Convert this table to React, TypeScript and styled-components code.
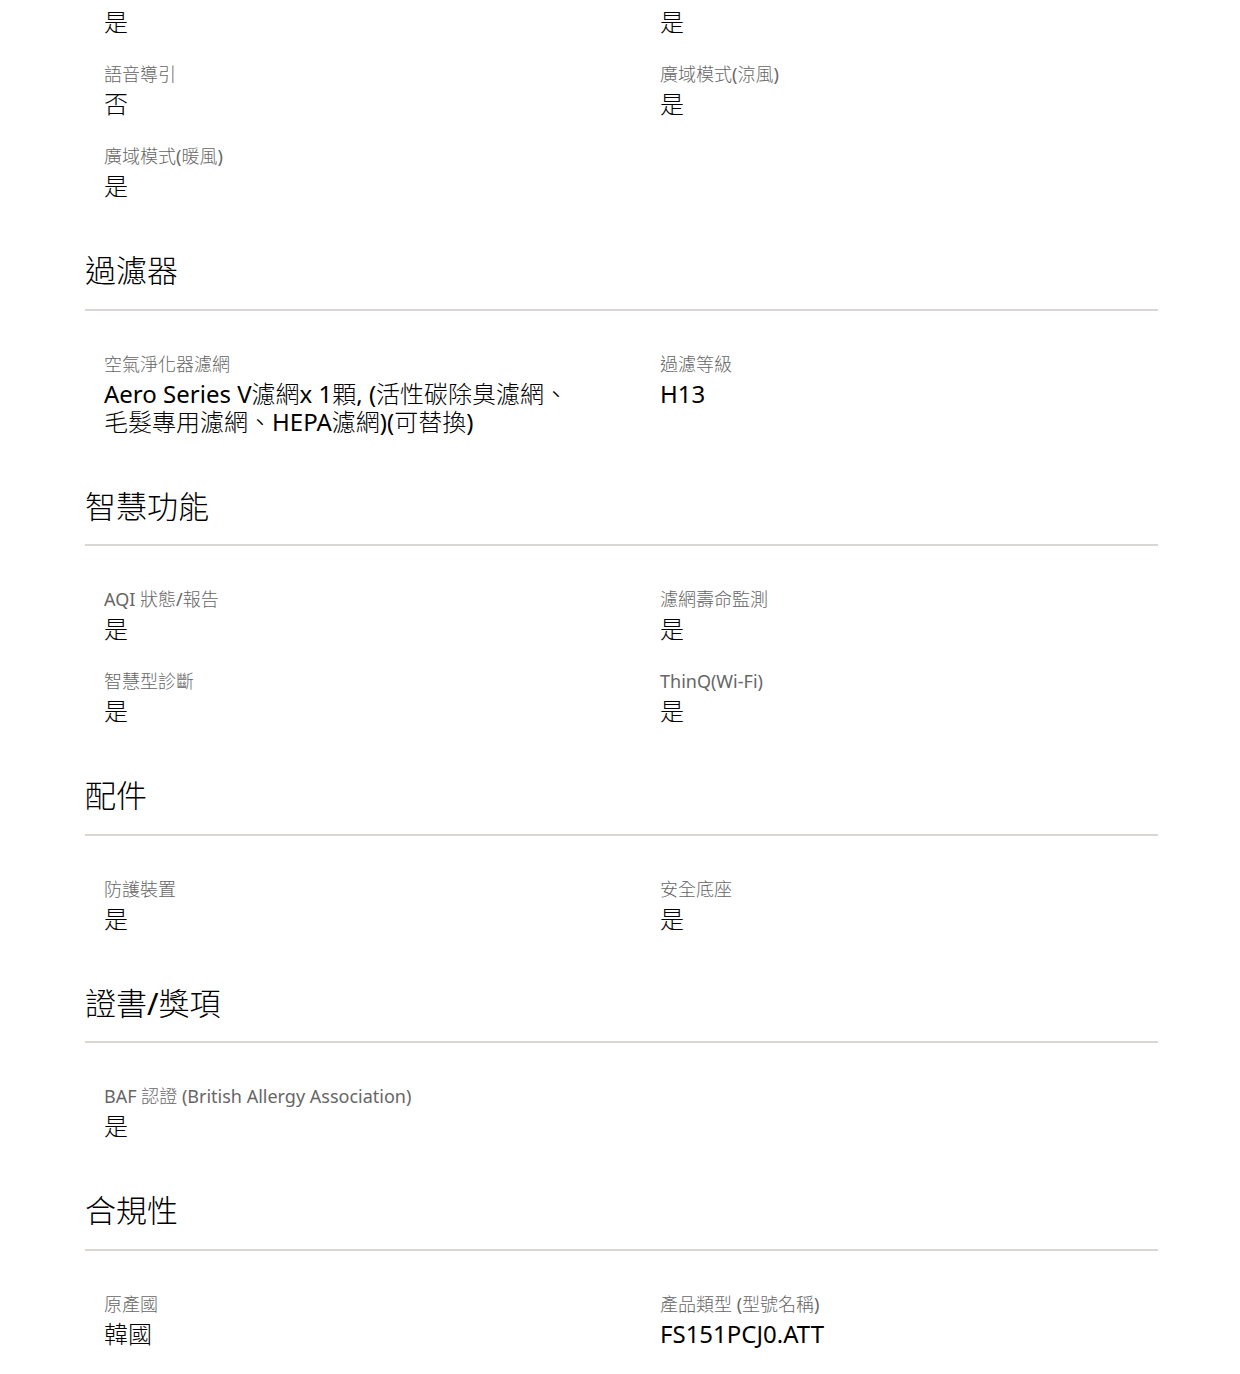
import React from "react";
import styled, { createGlobalStyle } from "styled-components";

type Spec = { label?: string; value: string };
type Section = { title?: string; items: Spec[] };

const SECTIONS: Section[] = [
  {
    items: [
      { value: "是" },
      { value: "是" },
      { label: "語音導引", value: "否" },
      { label: "廣域模式(涼風)", value: "是" },
      { label: "廣域模式(暖風)", value: "是" },
    ],
  },
  {
    title: "過濾器",
    items: [
      {
        label: "空氣淨化器濾網",
        value: "Aero Series V濾網x 1顆, (活性碳除臭濾網、毛髮專用濾網、HEPA濾網)(可替換)",
      },
      { label: "過濾等級", value: "H13" },
    ],
  },
  {
    title: "智慧功能",
    items: [
      { label: "AQI 狀態/報告", value: "是" },
      { label: "濾網壽命監測", value: "是" },
      { label: "智慧型診斷", value: "是" },
      { label: "ThinQ(Wi-Fi)", value: "是" },
    ],
  },
  {
    title: "配件",
    items: [
      { label: "防護裝置", value: "是" },
      { label: "安全底座", value: "是" },
    ],
  },
  {
    title: "證書/獎項",
    items: [{ label: "BAF 認證 (British Allergy Association)", value: "是" }],
  },
  {
    title: "合規性",
    items: [
      { label: "原產國", value: "韓國" },
      { label: "產品類型 (型號名稱)", value: "FS151PCJ0.ATT" },
    ],
  },
];

// CJK runs are set lighter than latin ones, like the site font does
const HAN = /([\u3000-\u9fff\uff00-\uffef]+)/;
const mixed = (text: string) =>
  text.split(HAN).map((part, i) => (i % 2 === 1 ? <Han key={i}>{part}</Han> : part));

export default function App() {
  return (
    <>
      <GlobalStyle />
      <Page>
        {SECTIONS.map((section, i) => (
          <SpecSection key={i}>
            {section.title && (
              <>
                <Heading>{mixed(section.title)}</Heading>
                <Divider />
              </>
            )}
            <SpecGrid $first={!section.title}>
              {section.items.map((item, j) => (
                <SpecItem key={j}>
                  {item.label && <Label>{mixed(item.label)}</Label>}
                  <Value>{mixed(item.value)}</Value>
                </SpecItem>
              ))}
            </SpecGrid>
          </SpecSection>
        ))}
      </Page>
    </>
  );
}

const GlobalStyle = createGlobalStyle`
  html, body {
    margin: 0;
    padding: 0;
    background: #fff;
  }
  body {
    font-family: "Noto Sans", "Noto Sans CJK TC", sans-serif;
    color: #000;
  }
`;

const Page = styled.div`
  width: 1073px;
  padding: 8px 0 40px 85px;
`;

const SpecSection = styled.section`
  display: flex;
  flex-direction: column;
`;

const Han = styled.span`
  font-weight: 300;
`;

const Heading = styled.h2`
  margin: 50px 0 0;
  font-size: 31px;
  line-height: 40px;
  font-weight: 400;
  color: #000;
`;

const Divider = styled.hr`
  margin: 18.5px 0 0;
  border: 0;
  height: 2px;
  background-color: #d9d6d3;
`;

const SpecGrid = styled.div<{ $first?: boolean }>`
  display: grid;
  grid-template-columns: 1fr 1fr;
  column-gap: 77px;
  row-gap: 26px;
  padding: ${(p) => (p.$first ? "0 19px" : "41px 19px 0")};
`;

const SpecItem = styled.div`
  display: flex;
  flex-direction: column;
  gap: 4px;
`;

const Label = styled.div`
  font-size: 18px;
  line-height: 24px;
  font-weight: 400;
  color: #666;
`;

const Value = styled.div`
  font-size: 24px;
  line-height: 28px;
  font-weight: 400;
  color: #000;
`;
